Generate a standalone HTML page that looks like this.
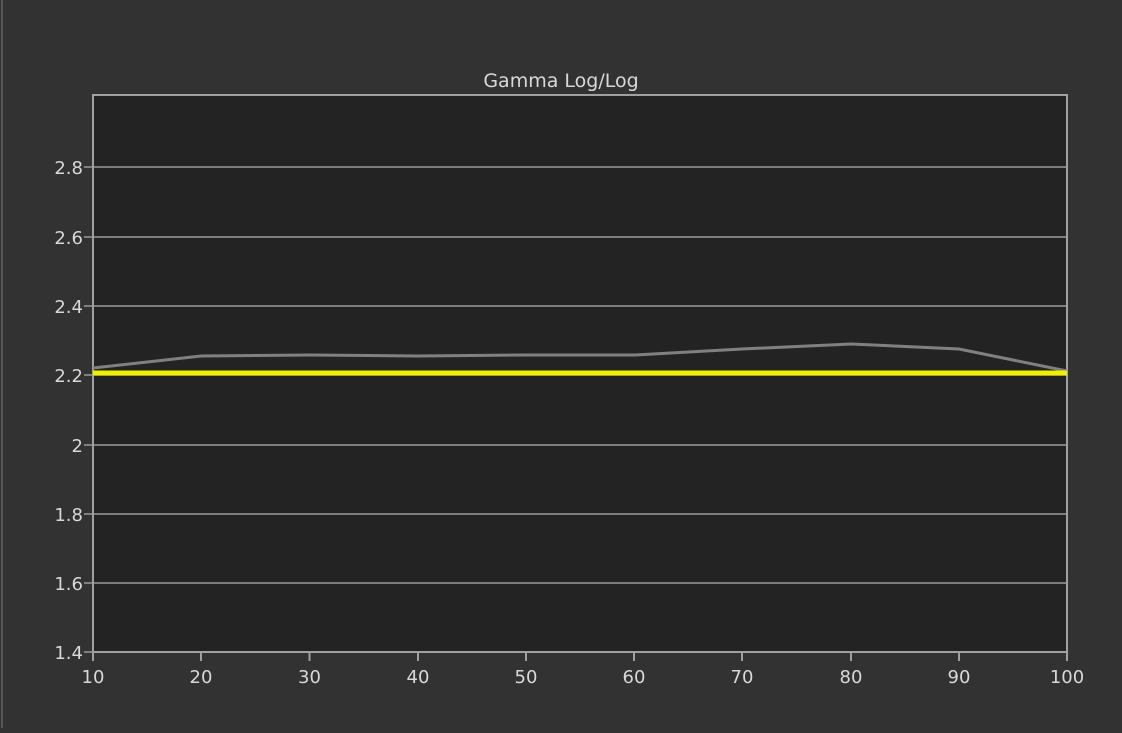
<!DOCTYPE html><html><head><style>body{margin:0;background:#323232;width:1122px;height:728px;overflow:hidden}</style></head><body>
<svg width="1122" height="728" xmlns="http://www.w3.org/2000/svg" font-family="DejaVu Sans, Liberation Sans, sans-serif">
<rect width="1122" height="728" fill="#323232"/>
<rect x="1" y="0" width="2" height="728" fill="#555"/>
<rect x="93" y="95" width="974" height="557" fill="#232323"/>
<g stroke="#999" stroke-width="1.5">
<line x1="84" y1="167" x2="1067" y2="167"/><line x1="84" y1="237" x2="1067" y2="237"/><line x1="84" y1="306" x2="1067" y2="306"/><line x1="84" y1="375" x2="1067" y2="375"/><line x1="84" y1="445" x2="1067" y2="445"/><line x1="84" y1="514" x2="1067" y2="514"/><line x1="84" y1="583" x2="1067" y2="583"/><line x1="84" y1="652" x2="1067" y2="652"/>
</g>
<rect x="93" y="95" width="974" height="557" fill="none" stroke="#a0a0a0" stroke-width="2"/>
<g stroke="#a0a0a0" stroke-width="2">
<line x1="93" y1="652" x2="93" y2="661"/><line x1="201" y1="652" x2="201" y2="661"/><line x1="309.5" y1="652" x2="309.5" y2="661"/><line x1="418" y1="652" x2="418" y2="661"/><line x1="526" y1="652" x2="526" y2="661"/><line x1="634" y1="652" x2="634" y2="661"/><line x1="742" y1="652" x2="742" y2="661"/><line x1="851" y1="652" x2="851" y2="661"/><line x1="959" y1="652" x2="959" y2="661"/><line x1="1067" y1="652" x2="1067" y2="661"/>
</g>
<polyline fill="none" stroke="#808080" stroke-width="3" points="93,368 201,356 309.5,355 418,356 526,355 634,355 742,349 851,344 959,349 1067,371"/>
<line x1="93" y1="373" x2="1067" y2="373" stroke="#f0f000" stroke-width="5"/>
<g fill="#d8d8d8" font-size="18">
<text x="561" y="87" text-anchor="middle" font-size="19">Gamma Log/Log</text>
<g text-anchor="end">
<text x="83" y="174">2.8</text><text x="83" y="244">2.6</text><text x="83" y="313">2.4</text><text x="83" y="382">2.2</text><text x="83" y="452">2</text><text x="83" y="521">1.8</text><text x="83" y="590">1.6</text><text x="83" y="659">1.4</text>
</g>
<g text-anchor="middle">
<text x="93" y="683">10</text><text x="201" y="683">20</text><text x="309.5" y="683">30</text><text x="418" y="683">40</text><text x="526" y="683">50</text><text x="634" y="683">60</text><text x="742" y="683">70</text><text x="851" y="683">80</text><text x="959" y="683">90</text><text x="1067" y="683">100</text>
</g></g>
</svg></body></html>
